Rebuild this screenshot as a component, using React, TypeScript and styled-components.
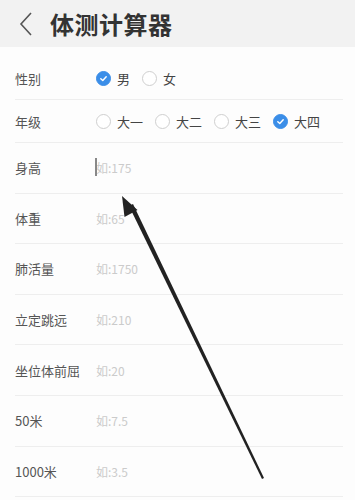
import { useState } from "react";
import styled, { createGlobalStyle } from "styled-components";

const GlobalStyle = createGlobalStyle`
  html, body {
    margin: 0;
    padding: 0;
    background: #fdfdfd;
    font-family: "Noto Sans CJK SC", "Noto Sans", sans-serif;
  }
`;

const Page = styled.div`
  position: relative;
  width: 355px;
  height: 500px;
  overflow: hidden;
  background: #fdfdfd;
`;

const Header = styled.div`
  height: 47px;
  display: flex;
  align-items: center;
  background: #f2f2f2;
`;

const BackButton = styled.button`
  width: 50px;
  height: 47px;
  display: flex;
  align-items: center;
  justify-content: center;
  padding: 0 0 0 2px;
  border: none;
  background: none;
  cursor: pointer;
`;

const Title = styled.h1`
  margin: 0;
  font-size: 24px;
  font-weight: 700;
  color: #333;
  letter-spacing: 0.5px;
`;

const Form = styled.div`
  padding-top: 10px;
`;

const Row = styled.div<{ $h: number }>`
  box-sizing: border-box;
  height: ${(p) => p.$h}px;
  margin: 0 12px 0 15px;
  display: flex;
  align-items: center;
  border-bottom: 1px solid #eeeeee;
`;

const Label = styled.div`
  width: 81px;
  flex-shrink: 0;
  font-size: 13px;
  color: #555;
`;

const RadioGroup = styled.div`
  display: flex;
  align-items: center;
`;

const RadioItem = styled.label`
  display: flex;
  align-items: center;
  gap: 6px;
  margin-right: 12px;
  font-size: 13px;
  color: #444;
  cursor: pointer;
`;

const Circle = styled.span<{ $on: boolean }>`
  box-sizing: border-box;
  width: 15px;
  height: 15px;
  border-radius: 50%;
  display: flex;
  align-items: center;
  justify-content: center;
  background: ${(p) => (p.$on ? "#3b8ee8" : "#fff")};
  border: 1px solid ${(p) => (p.$on ? "#3b8ee8" : "#cfcfcf")};
`;

const InputWrap = styled.div`
  position: relative;
  flex: 1;
  display: flex;
  align-items: center;
`;

const Input = styled.input`
  flex: 1;
  border: none;
  outline: none;
  background: transparent;
  padding: 0;
  font-family: inherit;
  font-size: 12px;
  color: #333;
  &::placeholder {
    color: #cbcbcb;
  }
`;

const Caret = styled.span`
  position: absolute;
  left: -1px;
  top: 50%;
  width: 1.5px;
  height: 18px;
  margin-top: -10px;
  background: #888;
`;

const Arrow = styled.svg`
  position: absolute;
  left: 0;
  top: 0;
  pointer-events: none;
`;

const Check = () => (
  <svg width="9" height="9" viewBox="0 0 10 10">
    <path d="M2 5.2 L4.2 7.3 L8 3" fill="none" stroke="#fff" strokeWidth="1.6" strokeLinecap="round" strokeLinejoin="round" />
  </svg>
);

function Radio({
  options,
  value,
  onChange,
}: {
  options: string[];
  value: string;
  onChange: (v: string) => void;
}) {
  return (
    <RadioGroup>
      {options.map((o) => (
        <RadioItem key={o} onClick={() => onChange(o)}>
          <Circle $on={value === o}>{value === o && <Check />}</Circle>
          {o}
        </RadioItem>
      ))}
    </RadioGroup>
  );
}

const fields = [
  { label: "身高", hint: "如:175" },
  { label: "体重", hint: "如:65" },
  { label: "肺活量", hint: "如:1750" },
  { label: "立定跳远", hint: "如:210" },
  { label: "坐位体前屈", hint: "如:20" },
  { label: "50米", hint: "如:7.5" },
  { label: "1000米", hint: "如:3.5" },
];

export default function App() {
  const [sex, setSex] = useState("男");
  const [grade, setGrade] = useState("大四");

  return (
    <Page>
      <GlobalStyle />
      <Header>
        <BackButton>
          <svg width="16" height="26" viewBox="0 0 16 26">
            <path d="M13 2 L3 13 L13 24" fill="none" stroke="#555" strokeWidth="1.6" />
          </svg>
        </BackButton>
        <Title>体测计算器</Title>
      </Header>
      <Form>
        <Row $h={43}>
          <Label>性别</Label>
          <Radio options={["男", "女"]} value={sex} onChange={setSex} />
        </Row>
        <Row $h={43}>
          <Label>年级</Label>
          <Radio options={["大一", "大二", "大三", "大四"]} value={grade} onChange={setGrade} />
        </Row>
        {fields.map((f, i) => (
          <Row $h={50.6} key={f.label}>
            <Label>{f.label}</Label>
            <InputWrap>
              {i === 0 && <Caret />}
              <Input placeholder={f.hint} />
            </InputWrap>
          </Row>
        ))}
      </Form>
      <Arrow width="355" height="500" viewBox="0 0 355 500">
        <polygon points="129,206 133,204 264,478 262,479" fill="#222" />
        <polygon points="122,196 137.5,210 124.5,217" fill="#222" />
      </Arrow>
    </Page>
  );
}
